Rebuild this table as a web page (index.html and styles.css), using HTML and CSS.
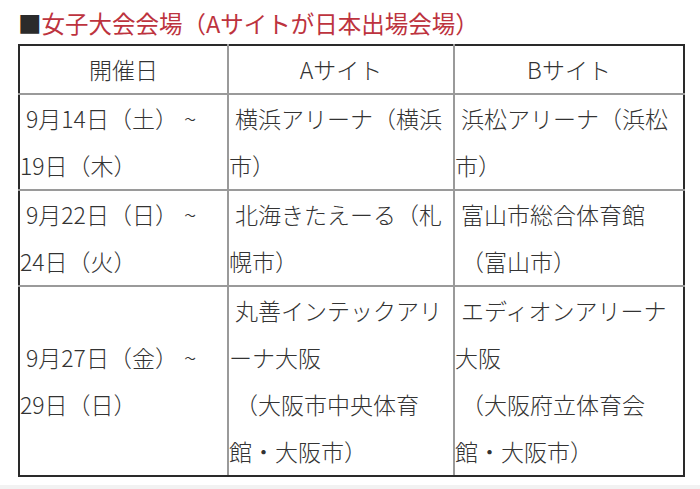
FILE: index.html
```html
<!DOCTYPE html>
<html lang="ja">
<head>
<meta charset="utf-8">
<link rel="stylesheet" href="styles.css">
</head>
<body>
<div class="page">
  <h2 class="title"><span class="mark">■</span>女子大会会場（Aサイトが日本出場会場）</h2>
  <table class="venues">
    <colgroup>
      <col class="c1"><col class="c2"><col class="c3">
    </colgroup>
    <thead>
      <tr class="head"><th>開催日</th><th>Aサイト</th><th>Bサイト</th></tr>
    </thead>
    <tbody>
      <tr class="r2">
        <td><span class="ind">9月14日（土）<span class="tilde">~</span></span><br>19日（木）</td>
        <td><span class="ind">横浜アリーナ（横浜</span><br>市）</td>
        <td><span class="ind">浜松アリーナ（浜松</span><br>市）</td>
      </tr>
      <tr class="r2">
        <td><span class="ind">9月22日（日）<span class="tilde">~</span></span><br>24日（火）</td>
        <td><span class="ind">北海きたえーる（札</span><br>幌市）</td>
        <td><span class="ind">富山市総合体育館</span><br><span class="ind">（富山市）</span></td>
      </tr>
      <tr class="r4">
        <td><span class="ind">9月27日（金）<span class="tilde">~</span></span><br>29日（日）</td>
        <td><span class="ind">丸善インテックアリ</span><br>ーナ大阪<br><span class="ind">（大阪市中央体育</span><br>館・大阪市）</td>
        <td><span class="ind">エディオンアリーナ</span><br>大阪<br><span class="ind">（大阪府立体育会</span><br>館・大阪市）</td>
      </tr>
    </tbody>
  </table>
  <div class="bottom-band"></div>
</div>
</body>
</html>
```
FILE: styles.css
```css
html, body {
  margin: 0;
  padding: 0;
  background: #ffffff;
}
body {
  font-family: "Noto Sans CJK JP", "Noto Sans", sans-serif;
  color: #333333;
}
.page {
  width: 700px;
  height: 489px;
  overflow: hidden;
}
.title {
  margin: 0 0 4px 0;
  padding: 6px 0 0 18px;
  font-size: 23.5px;
  line-height: 34px;
  font-weight: 400;
  color: #bd333e;
  white-space: nowrap;
}
.mark {
  color: #2b2b2b;
}
.venues {
  margin-left: 18px;
  width: 665px;
  border-collapse: collapse;
  table-layout: fixed;
  border: 2px solid #2a2a2a;
  font-size: 23px;
  line-height: 47px;
  font-weight: 300;
}
.c1 { width: 209px; }
.c2 { width: 226px; }
.c3 { width: 230px; }
.venues th,
.venues td {
  border: 2px solid #9a9a9a;
  padding: 0;
  vertical-align: middle;
  text-align: left;
  font-weight: 300;
  white-space: nowrap;
}
.venues th {
  text-align: center;
  height: 47px;
}
.venues thead tr th {
  border-top: 2px solid #2a2a2a;
}
.venues th:first-child,
.venues td:first-child {
  border-left: 2px solid #2a2a2a;
}
.venues th:last-child,
.venues td:last-child {
  border-right: 2px solid #2a2a2a;
}
.venues tbody tr:last-child td {
  border-bottom: 2px solid #2a2a2a;
}
.ind {
  padding-left: 6px;
}
.tilde {
  padding-left: 6px;
}
.bottom-band {
  margin-top: 8px;
  height: 12px;
  background: #f2f2f2;
}
```
